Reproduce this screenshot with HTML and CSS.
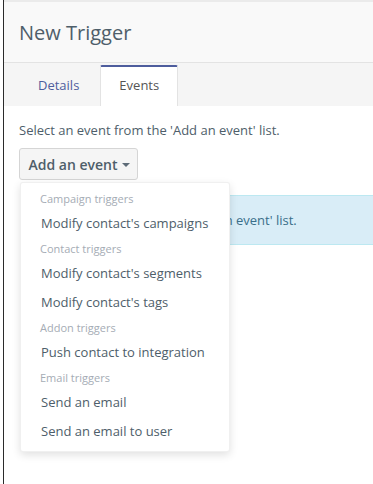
FILE: index.html
```html
<!DOCTYPE html>
<html>
<head>
<meta charset="utf-8">
<link rel="stylesheet" href="styles.css">
</head>
<body>
<div class="frame">
  <header class="page-header">
    <h1 class="title">New Trigger</h1>
  </header>
  <nav class="tabs">
    <a class="tab">Details</a>
    <a class="tab active">Events</a>
  </nav>
  <main class="content">
    <p class="hint">Select an event from the 'Add an event' list.</p>
    <div class="btn-group">
      <button class="btn">Add an event <span class="caret"></span></button>
      <ul class="menu">
        <li class="menu-header">Campaign triggers</li>
        <li class="menu-item">Modify contact's campaigns</li>
        <li class="menu-header">Contact triggers</li>
        <li class="menu-item">Modify contact's segments</li>
        <li class="menu-item">Modify contact's tags</li>
        <li class="menu-header">Addon triggers</li>
        <li class="menu-item">Push contact to integration</li>
        <li class="menu-header">Email triggers</li>
        <li class="menu-item">Send an email</li>
        <li class="menu-item">Send an email to user</li>
      </ul>
    </div>
    <div class="alert">Select an event from the 'Add an event' list.</div>
  </main>
</div>
</body>
</html>
```
FILE: styles.css
```css
html, body {
  margin: 0;
  padding: 0;
  background: #fff;
  font-family: "Open Sans", "Liberation Sans", sans-serif;
  overflow: hidden;
}
.frame {
  margin-left: 3px;
  border-left: 1px solid #2b2b2b;
  min-height: 484px;
  box-sizing: border-box;
}
.page-header {
  height: 60px;
  background: #f9f9f9;
  border-top: 2px solid #ebebeb;
  border-bottom: 1px solid #e3e3e3;
  display: flex;
  align-items: center;
  padding-left: 15px;
  box-sizing: content-box;
}
.title {
  margin: 0;
  font-size: 20px;
  font-weight: 400;
  color: #4e5e6a;
  line-height: 28px;
  padding-top: 2px;
}
.tabs {
  display: flex;
  background: #f5f5f5;
  padding: 2px 0 0 15px;
  height: 41px;
}
.tab {
  display: flex;
  align-items: center;
  padding: 0 18px 3px 18px;
  margin-right: 2px;
  font-size: 13px;
  color: #4e5d9d;
  border: 1px solid transparent;
  border-top: 2px solid transparent;
  border-bottom: 0;
}
.tab.active {
  background: #fff;
  color: #555;
  border-color: #e3e3e3;
  border-top-color: #4e5d9d;
  border-radius: 2px 2px 0 0;
}
.content {
  padding: 15px 0 15px 15px;
}
.hint {
  margin: 0 0 9px;
  font-size: 13px;
  line-height: 18px;
  color: #4e5e6a;
}
.btn-group {
  position: relative;
  display: inline-block;
}
.btn {
  font-family: inherit;
  font-size: 14px;
  font-weight: 600;
  color: #4e5e6a;
  background: #f5f5f5;
  border: 1px solid #d5d5d5;
  border-radius: 3px;
  height: 32px;
  width: 119px;
  padding: 0 0 0 1px;
  display: flex;
  align-items: center;
  justify-content: center;
  gap: 4px;
}
.caret {
  width: 0;
  height: 0;
  border-left: 4px solid transparent;
  border-right: 4px solid transparent;
  border-top: 4px solid #5d6b77;
  margin-top: 1px;
}
.menu {
  position: absolute;
  top: 34px;
  left: 1px;
  width: 210px;
  box-sizing: border-box;
  margin: 0;
  padding: 5px 0;
  list-style: none;
  background: #fff;
  border: 1px solid rgba(0, 0, 0, 0.06);
  border-radius: 3px;
  box-shadow: 0 3px 8px rgba(0, 0, 0, 0.12);
  z-index: 2;
}
.menu-header {
  font-size: 11px;
  line-height: 15px;
  padding: 3px 19px;
  color: #a5acb5;
}
.menu-item {
  font-size: 13px;
  line-height: 17px;
  padding: 6px 20px;
  color: #4e5e6a;
}
.alert {
  margin-top: 15px;
  margin-left: 1px;
  padding: 15px;
  font-size: 13px;
  line-height: 18px;
  color: #3a6f8a;
  background: #d9edf7;
  border: 1px solid #bce8f1;
  border-right: 0;
}
```
